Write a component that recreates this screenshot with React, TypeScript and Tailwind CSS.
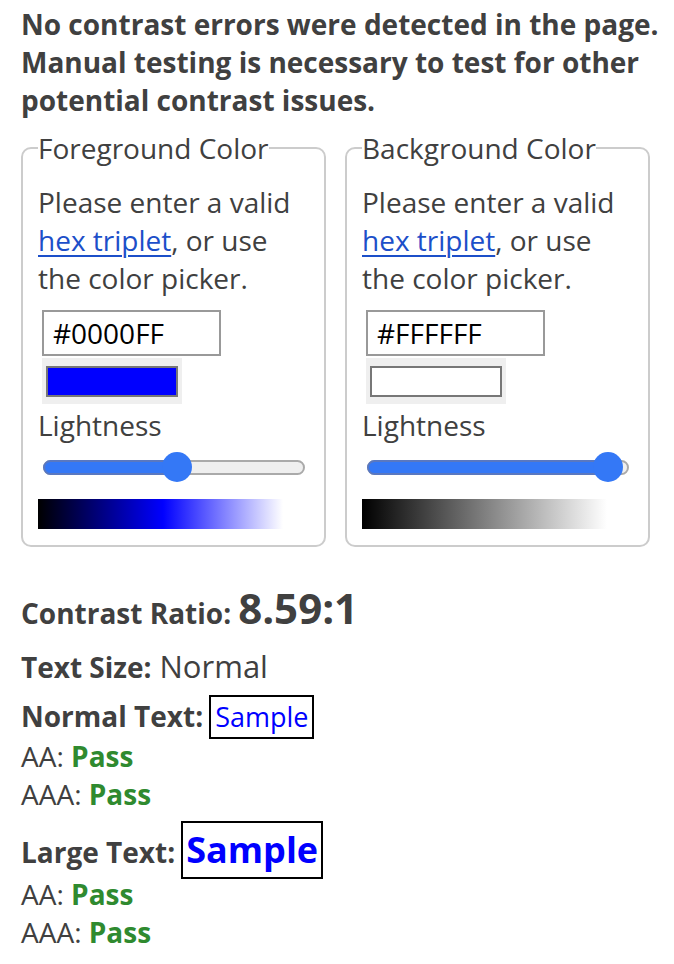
import React from 'react';

interface ColorFieldProps {
  legend: string;
  hex: string;
  swatch: string;
  lightness: number;
  gradient: string;
}

const ColorField = ({ legend, hex, swatch, lightness, gradient }: ColorFieldProps) => (
  <fieldset className="w-[305px] rounded-[10px] border-2 border-[#cccccc] px-[15px] pb-[16px]">
    <legend className="px-0 text-[28px] leading-[38px]">{legend}</legend>
    <p className="mt-[16px] text-[28px] leading-[38px]">
      Please enter a valid{' '}
      <a href="#" className="text-[#1c4fc9] underline underline-offset-[4px] decoration-[2px]">
        hex triplet
      </a>
      , or use the color picker.
    </p>
    <div className="mt-[13px] ml-[4px] flex h-[46px] w-[179px] items-center border-2 border-[#999999] bg-white pl-[9px] text-[28px] text-black">
      {hex}
    </div>
    <div className="ml-[4px] mt-[2px] h-[46px] w-[140px] bg-[#efefef] px-[4px] pt-[8px] pb-[7px]">
      <div className="h-[31px] w-full border-2 border-[#777777]" style={{ backgroundColor: swatch }} />
    </div>
    <div className="mt-[2px] text-[28px] leading-[38px]">Lightness</div>
    <div className="relative ml-[5px] mt-[8px] h-[30px] w-[262px]">
      <div className="absolute left-0 right-0 top-[8px] h-[15px] rounded-full border-2 border-[#aaaaaa] bg-[#efefef]" />
      <div
        className="absolute left-0 top-[8px] h-[15px] rounded-full border-2 border-[#5a78c0] bg-[#3478f6]"
        style={{ width: `${lightness}%` }}
      />
      <div
        className="absolute top-0 h-[30px] w-[30px] -translate-x-1/2 rounded-full bg-[#3478f6]"
        style={{ left: `${lightness}%` }}
      />
    </div>
    <div className="mt-[17px] h-[30px] w-[245px]" style={{ background: gradient }} />
  </fieldset>
);

const PassLine = ({ level }: { level: string }) => (
  <div className="h-[38px] text-[28px] leading-[38px]">
    {level}: <strong className="font-bold text-[#2f8a2f]">Pass</strong>
  </div>
);

const App = () => {
  return (
    <div className="min-h-[964px] bg-white pl-[21px] pr-[8px] pt-[5px] text-[#404040] font-['Open_Sans',sans-serif]">
      <h2 className="text-[28px] font-bold leading-[38px]">
        No contrast errors were detected in the page. Manual testing is necessary to test for other
        potential contrast issues.
      </h2>

      <div className="mt-[10px] flex gap-[19px]">
        <ColorField
          legend="Foreground Color"
          hex="#0000FF"
          swatch="#0000FF"
          lightness={51}
          gradient="linear-gradient(to right, #000000, #0000ff 51%, #ffffff)"
        />
        <ColorField
          legend="Background Color"
          hex="#FFFFFF"
          swatch="#FFFFFF"
          lightness={92}
          gradient="linear-gradient(to right, #000000, #ffffff)"
        />
      </div>

      <div className="mt-[37px] flex h-[48px] items-baseline gap-[7px] leading-[48px]">
        <span className="text-[28px] font-bold">Contrast Ratio:</span>
        <span className="text-[42px] font-bold">8.59:1</span>
      </div>

      <div className="mt-[12px] flex h-[44px] items-baseline gap-[8px] leading-[44px]">
        <span className="text-[28px] font-bold">Text Size:</span>
        <span className="text-[31px]">Normal</span>
      </div>

      <div className="mt-[7px] flex h-[42px] items-baseline gap-[6px] leading-[40px]">
        <span className="text-[28px] font-bold">Normal Text:</span>
        <span className="border-2 border-black px-[4px] text-[27px] leading-[40px] text-[#0000ff]">Sample</span>
      </div>
      <PassLine level="AA" />
      <PassLine level="AAA" />

      <div className="mt-[8px] flex h-[54px] items-baseline gap-[6px] leading-[54px]">
        <span className="text-[28px] font-bold">Large Text:</span>
        <span className="border-2 border-black px-[3px] text-[36px] font-bold leading-[54px] text-[#0000ff]">Sample</span>
      </div>
      <PassLine level="AA" />
      <PassLine level="AAA" />
    </div>
  );
};

export default App;
